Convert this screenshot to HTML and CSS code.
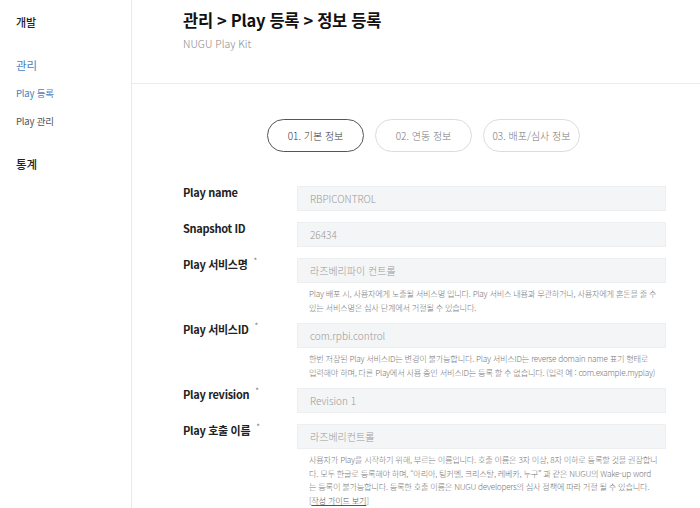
FILE: index.html
```html
<!DOCTYPE html>
<html lang="ko">
<head>
<meta charset="utf-8">
<link rel="stylesheet" href="styles.css">
</head>
<body>
<div class="layout">
  <aside class="sidebar">
    <div class="side-head">개발</div>
    <div class="side-group">관리</div>
    <div class="side-item active">Play 등록</div>
    <div class="side-item">Play 관리</div>
    <div class="side-head stats">통계</div>
  </aside>
  <main class="main">
    <header class="header">
      <h1 class="title">관리 &gt; Play 등록 &gt; 정보 등록</h1>
      <div class="subtitle">NUGU Play Kit</div>
    </header>
    <section class="content">
      <div class="steps">
        <div class="step active">01. 기본 정보</div>
        <div class="step">02. 연동 정보</div>
        <div class="step">03. 배포/심사 정보</div>
      </div>
      <div class="form">
        <div class="row">
          <div class="label">Play name</div>
          <div class="field"><div class="input">RBPICONTROL</div></div>
        </div>
        <div class="row">
          <div class="label">Snapshot ID</div>
          <div class="field"><div class="input">26434</div></div>
        </div>
        <div class="row">
          <div class="label">Play 서비스명<span class="req">*</span></div>
          <div class="field">
            <div class="input">라즈베리파이 컨트롤</div>
            <p class="help">Play 배포 시, 사용자에게 노출될 서비스명 입니다. Play 서비스 내용과 무관하거나, 사용자에게 혼돈을 줄 수 있는 서비스명은 심사 단계에서 거절될 수 있습니다.</p>
          </div>
        </div>
        <div class="row">
          <div class="label">Play 서비스ID<span class="req">*</span></div>
          <div class="field">
            <div class="input">com.rpbi.control</div>
            <p class="help keep">한번 저장된 Play 서비스ID는 변경이 불가능합니다. Play 서비스ID는 reverse domain name 표기 형태로 입력해야 하며, 다른 Play에서 사용 중인 서비스ID는 등록 할 수 없습니다. (입력 예 : com.example.myplay)</p>
          </div>
        </div>
        <div class="row">
          <div class="label">Play revision<span class="req">*</span></div>
          <div class="field"><div class="input">Revision 1</div></div>
        </div>
        <div class="row">
          <div class="label">Play 호출 이름<span class="req">*</span></div>
          <div class="field">
            <div class="input">라즈베리컨트롤</div>
            <p class="help">사용자가 Play를 시작하기 위해, 부르는 이름입니다. 호출 이름은 3자 이상, 8자 이하로 등록할 것을 권장합니다. 모두 한글로 등록해야 하며, “아리아, 팅커벨, 크리스탈, 레베카, 누구” 과 같은 NUGU의 Wake-up word는 등록이 불가능합니다. 등록한 호출 이름은 NUGU developers의 심사 정책에 따라 거절 될 수 있습니다.</p>
            <p class="help guide">[<a href="#">작성 가이드 보기</a>]</p>
          </div>
        </div>
      </div>
    </section>
  </main>
</div>
</body>
</html>
```

FILE: styles.css
```css
* { box-sizing: border-box; }
html, body {
  margin: 0;
  padding: 0;
  background: #fff;
  font-family: "Noto Sans CJK KR", "Noto Sans", sans-serif;
  color: #222;
}
.layout {
  display: flex;
  min-height: 508px;
}
.sidebar {
  width: 132px;
  flex: none;
  border-right: 1px solid #ebebeb;
  padding: 13px 0 0 16px;
}
.side-head {
  font-size: 11px;
  font-weight: 500;
  color: #222;
  line-height: 18px;
}
.side-group {
  margin-top: 25px;
  font-size: 11.5px;
  color: #4a7fc1;
  line-height: 18px;
}
.side-item {
  margin-top: 10px;
  font-size: 9.5px;
  color: #555;
  line-height: 18px;
  letter-spacing: -0.2px;
}
.side-item.active { color: #4a7fc1; }
.side-head.stats { margin-top: 25px; font-size: 11.5px; }

.main {
  flex: 1;
  min-width: 0;
}
.header {
  height: 84px;
  border-bottom: 1px solid #ebebeb;
  padding: 7px 0 0 51px;
}
.title {
  margin: 0;
  font-size: 16.5px;
  font-weight: 700;
  line-height: 26px;
  color: #111;
  letter-spacing: -0.3px;
}
.subtitle {
  margin-top: 3px;
  font-size: 10.5px;
  color: #888;
  line-height: 16px;
  font-weight: 300;
}
.content {
  padding: 35px 0 0 51px;
}
.steps {
  display: flex;
  gap: 11px;
  padding-left: 84px;
}
.step {
  width: 97px;
  height: 33px;
  border: 1px solid #dcdcdc;
  border-radius: 17px;
  display: flex;
  align-items: center;
  justify-content: center;
  font-size: 10px;
  color: #777;
  font-weight: 300;
}
.step.active {
  border-color: #555;
  color: #333;
}
.form {
  margin-top: 34px;
}
.row {
  display: grid;
  grid-template-columns: 114px 369px;
  margin-bottom: 11px;
}
.label {
  font-size: 11px;
  font-weight: 700;
  color: #222;
  line-height: 16px;
  margin-top: -2px;
  letter-spacing: -0.3px;
}
.req {
  font-size: 8px;
  font-weight: 400;
  color: #777;
  vertical-align: top;
  margin-left: 6px;
  line-height: 10px;
}
.input {
  height: 25px;
  background: #f4f5f6;
  border: 1px solid #eceef0;
  padding: 0 12px;
  display: flex;
  align-items: center;
  font-size: 10px;
  color: #999;
  font-weight: 300;
}
.help {
  margin: 4px 0 -2px;
  padding: 0 8px 0 12px;
  font-size: 8.2px;
  line-height: 13.5px;
  color: #777;
  letter-spacing: -0.25px;
  font-weight: 300;
}
.help.keep {
  word-break: keep-all;
}
.help.guide {
  margin-top: 2px;
}
.help.guide a {
  color: #555;
  text-decoration: underline;
}
```
